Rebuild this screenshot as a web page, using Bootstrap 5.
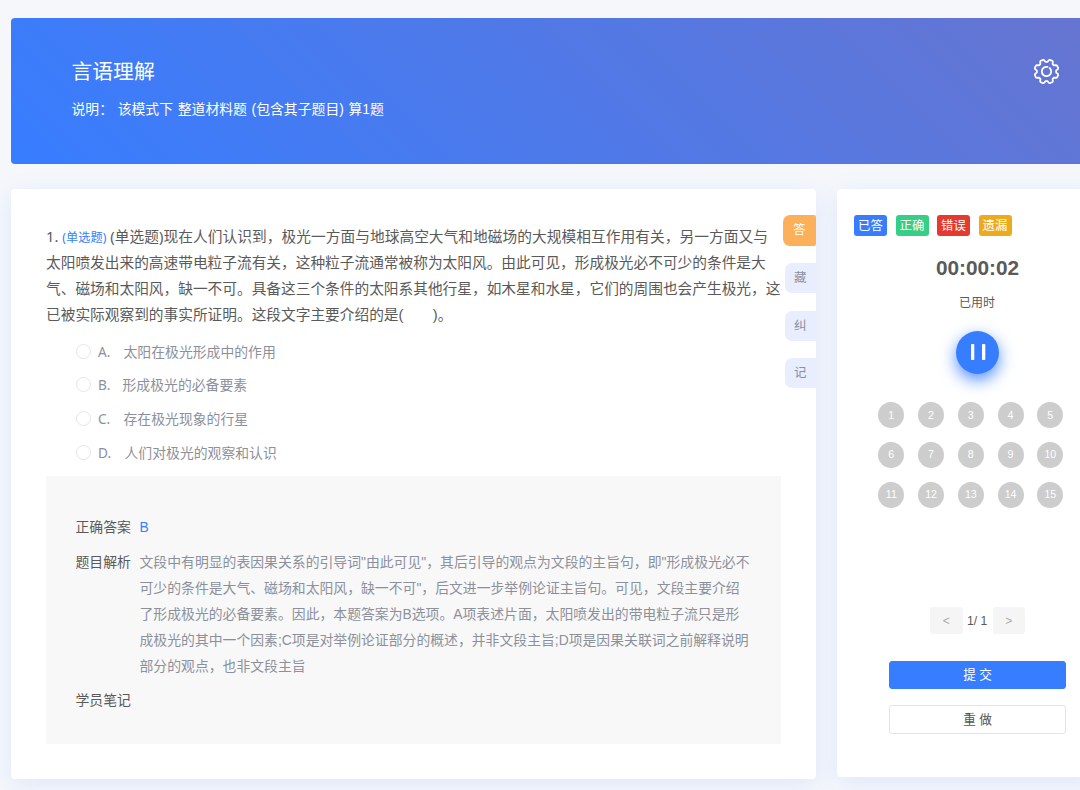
<!DOCTYPE html>
<html lang="zh-CN">
<head>
<meta charset="utf-8">
<meta name="viewport" content="width=device-width, initial-scale=1">
<title>言语理解</title>
<link rel="stylesheet" href="https://cdn.jsdelivr.net/npm/bootstrap@5.3.0/dist/css/bootstrap.min.css">
<style>
  body { width: 1080px; height: 790px; overflow: hidden; background: #f5f7fb; color: #5a5a5a; font-family: "Liberation Sans", "Noto Sans CJK SC", sans-serif; font-size: 13.85px; }
  .page { padding: 18px 0 0 11px; }
  .hero { height: 145.5px; padding: 0 20px 0 60.5px; border-radius: 4px 0 0 4px; background: linear-gradient(45deg, #377dff 0%, #6675d1 100%); }
  .hero h1 { font-size: 20.8px; line-height: 30px; margin: 39px 0 0; font-weight: 400; }
  .hero p { line-height: 22px; margin: 11px 0 0; white-space: pre; word-spacing: .8px; }
  .panels { gap: 21.5px; margin-top: 25.5px; }
  .panel { background: #fff; box-shadow: 0 6px 24px rgba(80, 130, 245, .13); }
  .quiz { width: 804.5px; height: 589.5px; padding: 35px 0 0 35px; border-radius: 4px; }
  .side { height: 588px; border-radius: 4px 0 0 4px; padding: 26px 0 0 17px; }
  .stem { font-size: 14.7px; line-height: 26px; }
  .stem > div { white-space: pre; height: 26px; }
  .stem .lead-line { letter-spacing: .055px; line-height: 24px; }
  .stem .kind { font-size: 12.2px; color: #377dff; }
  .latin { font-family: "Noto Sans", "Noto Sans CJK SC", sans-serif; }
  .options { padding: 10.5px 0 0 30px; color: #8c909b; }
  .option { height: 33.7px; line-height: 26px; }
  .option .form-check-input { width: 15px; height: 15px; margin: 5px 7px 0 0; border-color: #e3e5ea; }
  .option .letter { width: 25.5px; font-size: 13.6px; }
  .analysis { width: 734.5px; height: 267.5px; background: #f8f8f8; padding: 38px 0 0 29.5px; margin-top: 3px; line-height: 26px; }
  .analysis .term { width: 64px; }
  .analysis .detail { color: #8c909b; white-space: pre; }
  .tabs { right: 0; top: 26px; gap: 17.5px; }
  .tab { width: 30.5px; height: 30px; border-radius: 7px 0 0 7px; background: #e8eefe; color: #8a90a3; font-size: 12.5px; padding-top: 1px; }
  .tab.on { width: 32.5px; height: 30.5px; background: #fdb05a; color: #fff; border-radius: 7px 2px 2px 7px; }
  .tag { width: 33px; height: 21px; border-radius: 3px; color: #fff; font-size: 12.4px; padding-top: 1px; }
  .clock { font-size: 20.8px; line-height: 26px; font-weight: 700; margin-top: 19px; }
  .centered { width: 247px; }
  .used { font-size: 12px; line-height: 20px; margin-top: 12px; }
  .centered .used { margin-left: -1px; }
  .pause { width: 43px; height: 43px; border-radius: 50%; background: #377dff; box-shadow: 0 6px 16px rgba(55, 125, 255, .85); margin-top: 17.5px; }
  .numbers { display: grid; grid-template-columns: repeat(5, 26px); gap: 13.75px; margin: 28.5px 0 0 24.3px; }
  .number { width: 26px; height: 26px; border-radius: 50%; background: #cdcdcd; color: #fff; font-size: 10.6px; padding-top: 1px; }
  .pager { gap: 4.5px; margin-top: 99.4px; }
  .pager span.step { width: 32.5px; height: 27.5px; border-radius: 3px; background: #f5f5f5; color: #aaa; font-size: 12px; padding-top: 1px; }
  .action { width: 177px; height: 28px; border-radius: 3px; padding: 0; font-size: 12.6px; line-height: 26px; }
  .submit { background: #377dff; border-color: #377dff; color: #fff; margin-top: 26.2px; }
  .redo { border-color: #e2e4e6; color: #555; margin-top: 16.5px; height: 29px; }
</style>
</head>
<body>
<div class="page">
  <header class="hero d-flex justify-content-between text-white">
    <div>
      <h1>言语理解</h1>
      <p>说明： 该模式下 整道材料题 (包含其子题目) 算1题</p>
    </div>
    <svg width="27" height="27" viewBox="-13.5 -13.5 27 27" fill="none" stroke="#fff" stroke-width="1.8" stroke-linecap="round" stroke-linejoin="round" style="margin-top:40px">
      <path id="gear"/>
      <path d="M1-4.6A4.7 4.7 0 1 0 4.5-1.4M3.1-3.5A4.7 4.7 0 0 1 4.5-1.4"/>
    </svg>
  </header>

  <div class="panels d-flex">
    <main class="panel quiz position-relative flex-shrink-0">
      <div class="stem">
        <div class="latin lead-line">1. <span class="kind">(单选题)</span> (单选题)现在人们认识到，极光一方面与地球高空大气和地磁场的大规模相互作用有关，另一方面又与</div>
        <div>太阳喷发出来的高速带电粒子流有关，这种粒子流通常被称为太阳风。由此可见，形成极光必不可少的条件是大</div>
        <div>气、磁场和太阳风，缺一不可。具备这三个条件的太阳系其他行星，如木星和水星，它们的周围也会产生极光，这</div>
        <div>已被实际观察到的事实所证明。这段文字主要介绍的是(&#12288;&#12288;)。</div>
      </div>
      <div class="options">
        <label class="option d-flex"><input class="form-check-input" type="radio" name="answer"><span class="letter latin">A.</span><span>太阳在极光形成中的作用</span></label>
        <label class="option d-flex"><input class="form-check-input" type="radio" name="answer"><span class="letter latin" style="width:24.5px">B.</span><span>形成极光的必备要素</span></label>
        <label class="option d-flex"><input class="form-check-input" type="radio" name="answer"><span class="letter latin">C.</span><span>存在极光现象的行星</span></label>
        <label class="option d-flex"><input class="form-check-input" type="radio" name="answer"><span class="letter latin" style="width:26.5px">D.</span><span>人们对极光的观察和认识</span></label>
      </div>
      <section class="analysis">
        <div class="d-flex"><span class="term">正确答案</span><span style="color:#377dff">B</span></div>
        <div class="d-flex" style="margin-top:9px"><span class="term">题目解析</span>
          <div class="detail"><div>文段中有明显的表因果关系的引导词"由此可见"，其后引导的观点为文段的主旨句，即"形成极光必不</div><div>可少的条件是大气、磁场和太阳风，缺一不可"，后文进一步举例论证主旨句。可见，文段主要介绍</div><div>了形成极光的必备要素。因此，本题答案为B选项。A项表述片面，太阳喷发出的带电粒子流只是形</div><div>成极光的其中一个因素;C项是对举例论证部分的概述，并非文段主旨;D项是因果关联词之前解释说明</div><div>部分的观点，也非文段主旨</div></div>
        </div>
        <div style="margin-top:8px">学员笔记</div>
      </section>
      <div class="tabs position-absolute d-flex flex-column align-items-end">
        <span class="tab on d-flex align-items-center justify-content-center">答</span>
        <span class="tab d-flex align-items-center justify-content-center">藏</span>
        <span class="tab d-flex align-items-center justify-content-center">纠</span>
        <span class="tab d-flex align-items-center justify-content-center">记</span>
      </div>
    </main>

    <aside class="panel side flex-grow-1">
      <div class="d-flex" style="gap:8.5px">
        <span class="tag d-flex align-items-center justify-content-center" style="background:#377dff">已答</span>
        <span class="tag d-flex align-items-center justify-content-center" style="background:#35cf85">正确</span>
        <span class="tag d-flex align-items-center justify-content-center" style="background:#e63a30">错误</span>
        <span class="tag d-flex align-items-center justify-content-center" style="background:#edaa1c">遗漏</span>
      </div>
      <div class="centered d-flex flex-column align-items-center">
        <div class="clock">00:00:02</div>
        <div class="used">已用时</div>
        <div class="pause d-flex align-items-center justify-content-center">
          <svg width="16" height="16" fill="#fff"><rect x="1" width="3.3" height="16" rx=".8"/><rect x="12" width="3.3" height="16" rx=".8"/></svg>
        </div>
      </div>
      <div class="numbers" id="numbers"></div>
      <div class="centered d-flex flex-column align-items-center">
        <div class="pager d-flex align-items-center">
          <span class="step d-flex align-items-center justify-content-center">&lt;</span>
          <span style="font-size:12.2px;width:21px;white-space:nowrap;padding-top:1px">1/ 1</span>
          <span class="step d-flex align-items-center justify-content-center">&gt;</span>
        </div>
        <button class="btn action submit">提 交</button>
        <button class="btn action redo">重 做</button>
      </div>
    </aside>
  </div>
</div>
<script src="https://cdn.jsdelivr.net/npm/bootstrap@5.3.0/dist/js/bootstrap.bundle.min.js"></script>
<script>
  // Question navigator
  document.getElementById('numbers').innerHTML = Array.from({ length: 15 }, (_, i) =>
    `<span class="number d-flex align-items-center justify-content-center">${i + 1}</span>`).join('');
  // Eight-lobed settings gear
  const pts = [];
  for (let i = 0; i < 144; i++) {
    const a = i / 144 * Math.PI * 2;
    const wave = Math.tanh(2.4 * Math.cos(8 * (a - Math.PI / 8)) + .5);
    const r = 10.8 + 1.3 * wave;
    pts.push((r * Math.cos(a)).toFixed(2) + ' ' + (r * Math.sin(a)).toFixed(2));
  }
  document.getElementById('gear').setAttribute('d', 'M' + pts.join('L') + 'Z');
</script>
</body>
</html>
